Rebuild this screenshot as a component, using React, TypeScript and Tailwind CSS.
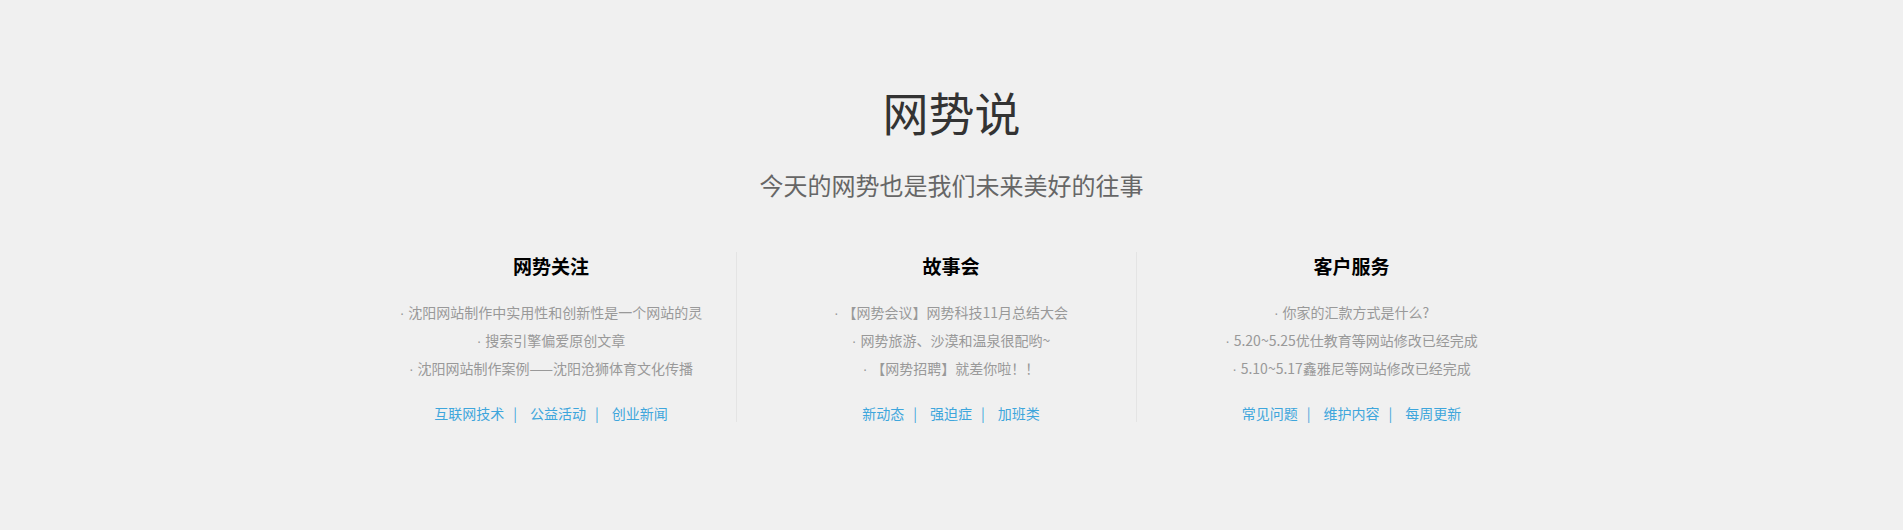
import React from 'react'

const font = { fontFamily: '"Noto Sans CJK SC", "Noto Sans", sans-serif' }

const columns = [
  {
    title: '网势关注',
    items: ['沈阳网站制作中实用性和创新性是一个网站的灵', '搜索引擎偏爱原创文章', '沈阳网站制作案例——沈阳沧狮体育文化传播'],
    links: ['互联网技术', '公益活动', '创业新闻'],
  },
  {
    title: '故事会',
    items: ['【网势会议】网势科技11月总结大会', '网势旅游、沙漠和温泉很配哟~', '【网势招聘】就差你啦！！'],
    links: ['新动态', '强迫症', '加班类'],
  },
  {
    title: '客户服务',
    items: ['你家的汇款方式是什么?', '5.20~5.25优仕教育等网站修改已经完成', '5.10~5.17鑫雅尼等网站修改已经完成'],
    links: ['常见问题', '维护内容', '每周更新'],
  },
]

export default function App() {
  return (
    <div className="min-h-[530px] w-full bg-[#f0f0f0]" style={font}>
      <div className="pt-[88px] text-center">
        <h2 className="text-[46px] leading-[46px] text-[#333]">网势说</h2>
        <p className="mt-[39px] text-[24px] leading-[24px] text-[#666]">今天的网势也是我们未来美好的往事</p>
      </div>

      {/* columns */}
      <div className="mx-auto mt-[55px] flex w-[1200px]">
        {columns.map((col, i) => (
          <div key={col.title} className="w-[400px] px-[15px]">
            <div className={i < 2 ? 'h-[170px] border-r border-[#e4e4e4] text-center' : 'h-[170px] text-center'}>
              <h3 className="pt-[4px] text-[19px] font-bold leading-[19px] text-black">{col.title}</h3>
              <ul className="mt-[23px] text-[14px] leading-[28px] text-[#999]">
                {col.items.map((it) => (
                  <li key={it} className="h-[28px] overflow-hidden">
                    <span className="font-['Liberation_Sans'] leading-none">· </span>
                    {it}
                  </li>
                ))}
              </ul>
              <div className="mt-[17px] text-[14px] leading-[28px] text-[#3ea6dc]">
                {col.links.map((l, j) => (
                  <span key={l}>
                    {l}
                    {j < col.links.length - 1 && <span className="ml-[9px] mr-[13px]">|</span>}
                  </span>
                ))}
              </div>
            </div>
          </div>
        ))}
      </div>
    </div>
  )
}
